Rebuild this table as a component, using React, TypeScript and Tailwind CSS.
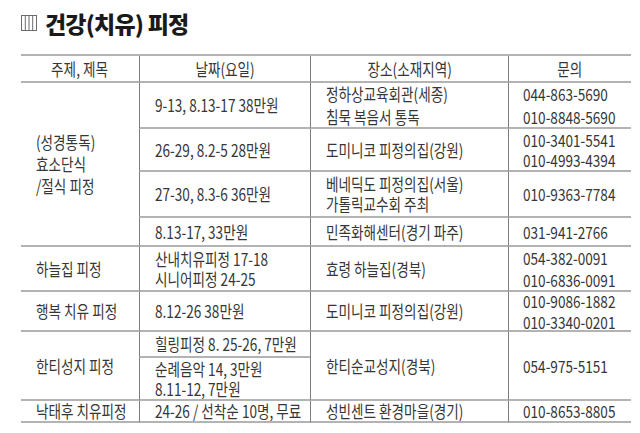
const FONT = "font-['Noto_Sans_CJK_KR','Noto_Sans',sans-serif]";

type Cell = {
  lines: string[];
  span?: string;
  leading?: string;
  center?: boolean;
  first?: boolean;
  pad?: string;
};

const cells: Cell[] = [
  { lines: ["주제, 제목"], center: true, first: true },
  { lines: ["날짜(요일)"], center: true },
  { lines: ["장소(소재지역)"], center: true },
  { lines: ["문의"], center: true },

  { lines: ["(성경통독)", "효소단식", "/절식 피정"], span: "row-span-4", leading: "leading-[22px]", first: true },
  { lines: ["9-13, 8.13-17 38만원"] },
  { lines: ["정하상교육회관(세종)", "침묵 복음서 통독"], leading: "leading-[23px]" },
  { lines: ["044-863-5690", "010-8848-5690"], leading: "leading-[23px]", pad: "pl-[14px]" },

  { lines: ["26-29, 8.2-5 28만원"] },
  { lines: ["도미니코 피정의집(강원)"] },
  { lines: ["010-3401-5541", "010-4993-4394"], pad: "pl-[14px]" },

  { lines: ["27-30, 8.3-6 36만원"] },
  { lines: ["베네딕도 피정의집(서울)", "가톨릭교수회 주최"] },
  { lines: ["010-9363-7784"], pad: "pl-[14px]" },

  { lines: ["8.13-17, 33만원"] },
  { lines: ["민족화해센터(경기 파주)"] },
  { lines: ["031-941-2766"], pad: "pl-[14px]" },

  { lines: ["하늘집 피정"], first: true },
  { lines: ["산내치유피정 17-18", "시니어피정 24-25"] },
  { lines: ["효령 하늘집(경북)"] },
  { lines: ["054-382-0091", "010-6836-0091"], leading: "leading-[22px]", pad: "pl-[14px]" },

  { lines: ["행복 치유 피정"], first: true },
  { lines: ["8.12-26 38만원"] },
  { lines: ["도미니코 피정의집(강원)"] },
  { lines: ["010-9086-1882", "010-3340-0201"], leading: "leading-[21px]", pad: "pl-[14px]" },

  { lines: ["한티성지 피정"], span: "row-span-2", first: true },
  { lines: ["힐링피정 8. 25-26, 7만원"] },
  { lines: ["한티순교성지(경북)"], span: "row-span-2" },
  { lines: ["054-975-5151"], span: "row-span-2", pad: "pl-[14px]" },

  { lines: ["순례음악 14, 3만원", "8.11-12, 7만원"] },

  { lines: ["낙태후 치유피정"], first: true },
  { lines: ["24-26 / 선착순 10명, 무료"] },
  { lines: ["성빈센트 환경마을(경기)"] },
  { lines: ["010-8653-8805"], pad: "pl-[14px]" },
];

function TitleIcon(): React.ReactElement {
  return (
    <svg width="16" height="16" viewBox="0 0 16 16" className="shrink-0">
      <rect x="0.5" y="0.5" width="15" height="15" fill="none" stroke="#6b6b6b" strokeWidth="1" />
      <line x1="4.3" y1="1" x2="4.3" y2="15" stroke="#6b6b6b" strokeWidth="1" />
      <line x1="8" y1="1" x2="8" y2="15" stroke="#6b6b6b" strokeWidth="1" />
      <line x1="11.7" y1="1" x2="11.7" y2="15" stroke="#6b6b6b" strokeWidth="1" />
    </svg>
  );
}

export default function App(): React.ReactElement {
  return (
    <div className={`h-[433px] w-[640px] overflow-hidden bg-white pl-[21px] pt-[12px] text-[#363636] ${FONT}`}>
      <div className="flex h-[22px] items-center gap-[8px]">
        <TitleIcon />
        <h1 className="text-[23px] font-black leading-[22px] tracking-[-0.8px] text-[#1a1a1a]">
          건강(치유) 피정
        </h1>
      </div>

      <div className="mt-[20px] grid w-[610px] grid-cols-[118px_171px_198px_123px] grid-rows-[27px_46px_43px_46px_29px_45px_40px_26px_43px_22px] border-t-2 border-[#b3b3b3]">
        {cells.map((c, i) => (
          <div
            key={i}
            className={`flex items-center border-b-2 border-b-[#b3b3b3] ${c.span ?? ""} ${
              c.first ? "" : "border-l border-l-[#7d7d7d]"
            } ${c.center ? "justify-center" : c.pad ?? "pl-[15px]"}`}
          >
            <div
              className={`whitespace-nowrap text-[17px] ${c.leading ?? "leading-[20px]"} scale-x-[0.8] ${
                c.center ? "origin-center text-center" : "origin-left"
              }`}
            >
              {c.lines.map((l, j) => (
                <div key={j}>{l}</div>
              ))}
            </div>
          </div>
        ))}
      </div>
    </div>
  );
}
